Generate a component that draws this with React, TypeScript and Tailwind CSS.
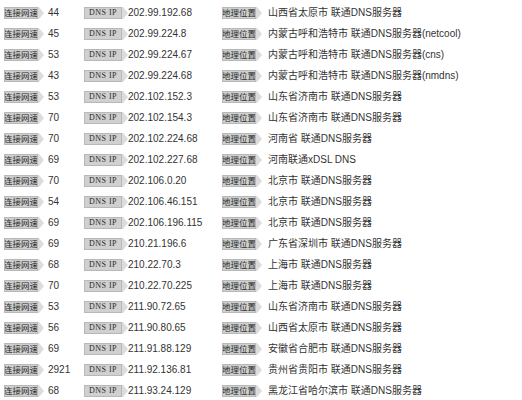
const rows: [string, string, string][] = [
  ["44", "202.99.192.68", "山西省太原市 联通DNS服务器"],
  ["45", "202.99.224.8", "内蒙古呼和浩特市 联通DNS服务器(netcool)"],
  ["53", "202.99.224.67", "内蒙古呼和浩特市 联通DNS服务器(cns)"],
  ["43", "202.99.224.68", "内蒙古呼和浩特市 联通DNS服务器(nmdns)"],
  ["53", "202.102.152.3", "山东省济南市 联通DNS服务器"],
  ["70", "202.102.154.3", "山东省济南市 联通DNS服务器"],
  ["70", "202.102.224.68", "河南省 联通DNS服务器"],
  ["69", "202.102.227.68", "河南联通xDSL DNS"],
  ["70", "202.106.0.20", "北京市 联通DNS服务器"],
  ["54", "202.106.46.151", "北京市 联通DNS服务器"],
  ["69", "202.106.196.115", "北京市 联通DNS服务器"],
  ["69", "210.21.196.6", "广东省深圳市 联通DNS服务器"],
  ["68", "210.22.70.3", "上海市 联通DNS服务器"],
  ["70", "210.22.70.225", "上海市 联通DNS服务器"],
  ["53", "211.90.72.65", "山东省济南市 联通DNS服务器"],
  ["56", "211.90.80.65", "山西省太原市 联通DNS服务器"],
  ["69", "211.91.88.129", "安徽省合肥市 联通DNS服务器"],
  ["2921", "211.92.136.81", "贵州省贵阳市 联通DNS服务器"],
  ["68", "211.93.24.129", "黑龙江省哈尔滨市 联通DNS服务器"],
];

const Tag = ({ label, w, serif }: { label: string; w: string; serif?: boolean }) => (
  <span className="flex items-center h-[12px]">
    <span
      className={`${w} h-[12px] flex items-center justify-center whitespace-nowrap overflow-hidden bg-[#d0d0d0] border border-[#b8b8b8] text-[#2a2a2a] leading-none ${
        serif
          ? "text-[8px] tracking-[0.5px] font-['Liberation_Serif',serif]"
          : "text-[8.5px] font-['Noto_Sans_CJK_SC',sans-serif]"
      }`}
    >
      {label}
    </span>
    <svg width="6" height="12" viewBox="0 0 6 12" className="shrink-0">
      <path d="M0 0 L1 0 L6 6 L1 12 L0 12 Z" fill="#dcdcdc" />
    </svg>
  </span>
);

export default function App() {
  return (
    <div className="w-[522px] h-[400px] bg-white overflow-hidden pt-[2px] font-['Liberation_Sans','Noto_Sans_CJK_SC',sans-serif] text-[#333]">
      {rows.map(([speed, ip, loc], i) => (
        <div key={i} className="flex items-center h-[21px] whitespace-nowrap">
          <div className="w-[44px] pl-[4px] flex">
            <Tag label="连接网速" w="w-[34px]" />
          </div>
          <div className="w-[40px] pl-[4px] text-[10px]">{speed}</div>
          <div className="w-[44px] flex">
            <Tag label="DNS IP" w="w-[38px]" serif />
          </div>
          <div className="w-[94px] text-[10px]">{ip}</div>
          <div className="w-[44px] flex">
            <Tag label="地理位置" w="w-[34px]" />
          </div>
          <div className="pl-[2px] text-[10px]">{loc}</div>
        </div>
      ))}
    </div>
  );
}
